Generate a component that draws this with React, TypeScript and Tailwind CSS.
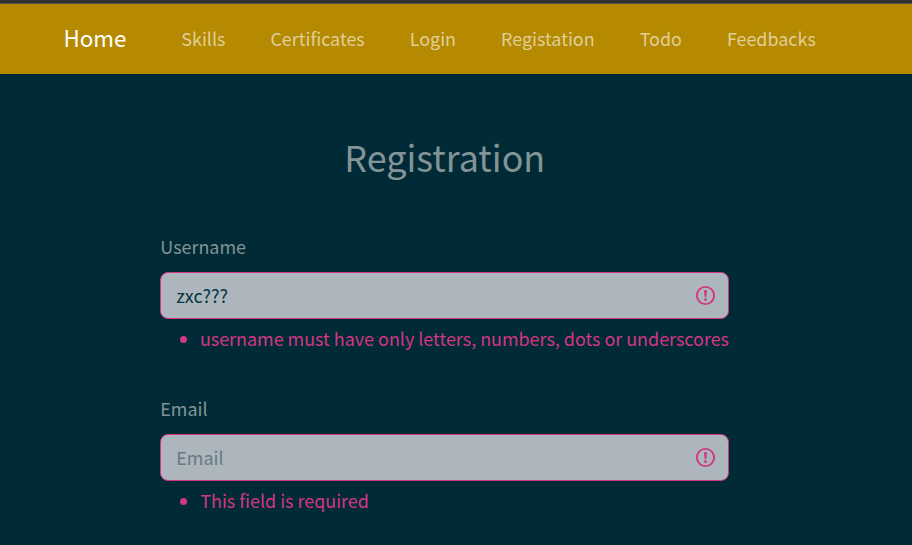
const links = ['Skills', 'Certificates', 'Login', 'Registation', 'Todo', 'Feedbacks'];

const fields = [
  {
    label: 'Username',
    value: 'zxc???',
    error: 'username must have only letters, numbers, dots or underscores',
  },
  { label: 'Email', value: '', error: 'This field is required' },
];

function WarningIcon() {
  return (
    <svg viewBox="-0.5 0 20 20" className="h-5 w-5 shrink-0 overflow-visible" fill="none" stroke="#d33682">
      <circle cx="10" cy="9.5" r="8.6" strokeWidth="1.9" />
      <path d="M8.4 4.3h3.2l-.8 6.9H9.2z" fill="#d33682" stroke="none" />
      <circle cx="10" cy="13.7" r="1.4" fill="#d33682" stroke="none" />
    </svg>
  );
}

function Field({ label, value, error }: { label: string; value: string; error: string }) {
  return (
    <div className="h-[162px]">
      <label className="block h-10 pl-[0.3px] leading-[28px]">{label}</label>
      <div className="flex h-[47px] items-center rounded-lg border border-[#d33682] bg-[#adb5bd] pr-[13px] pl-[15.3px]">
        <input
          className="h-[30px] min-w-0 flex-1 bg-transparent pb-[2px] text-[#073642] outline-none placeholder:text-[#657b83] placeholder:opacity-100"
          defaultValue={value}
          placeholder={label}
        />
        <WarningIcon />
      </div>
      <ul className="flex flex-col pt-[5px] text-[#d33682]">
        <li className="flex items-center pl-5 whitespace-nowrap">
          <span className="mr-[13.3px] h-[7px] w-[7px] rounded-full bg-[#d33682]" />
          <span className="pb-[2px] leading-[28px]">{error}</span>
        </li>
      </ul>
    </div>
  );
}

export default function App() {
  return (
    <div className="h-[545px] overflow-hidden bg-[#002b36] font-['Source_Sans_Pro','Noto_Sans_CJK_SC',sans-serif] text-[17.93px] text-[#839496]">
      <div className="h-1 border-b border-[#5a5146] bg-[#333336]" />
      <nav className="flex h-[70px] items-center gap-[45px] bg-[#b58900] pb-[2px] pl-[63.5px] text-white/60">
        <a className="mr-[9.8px] text-[22.4px] text-white">Home</a>
        {links.map((l) => (
          <a key={l}>{l}</a>
        ))}
      </nav>
      <main className="ml-[160px] w-[569px]">
        <h1 className="h-[158px] pt-[58px] pl-[0.6px] text-center text-[35.85px] leading-[48px]">Registration</h1>
        {fields.map((f) => (
          <Field key={f.label} {...f} />
        ))}
      </main>
    </div>
  );
}
